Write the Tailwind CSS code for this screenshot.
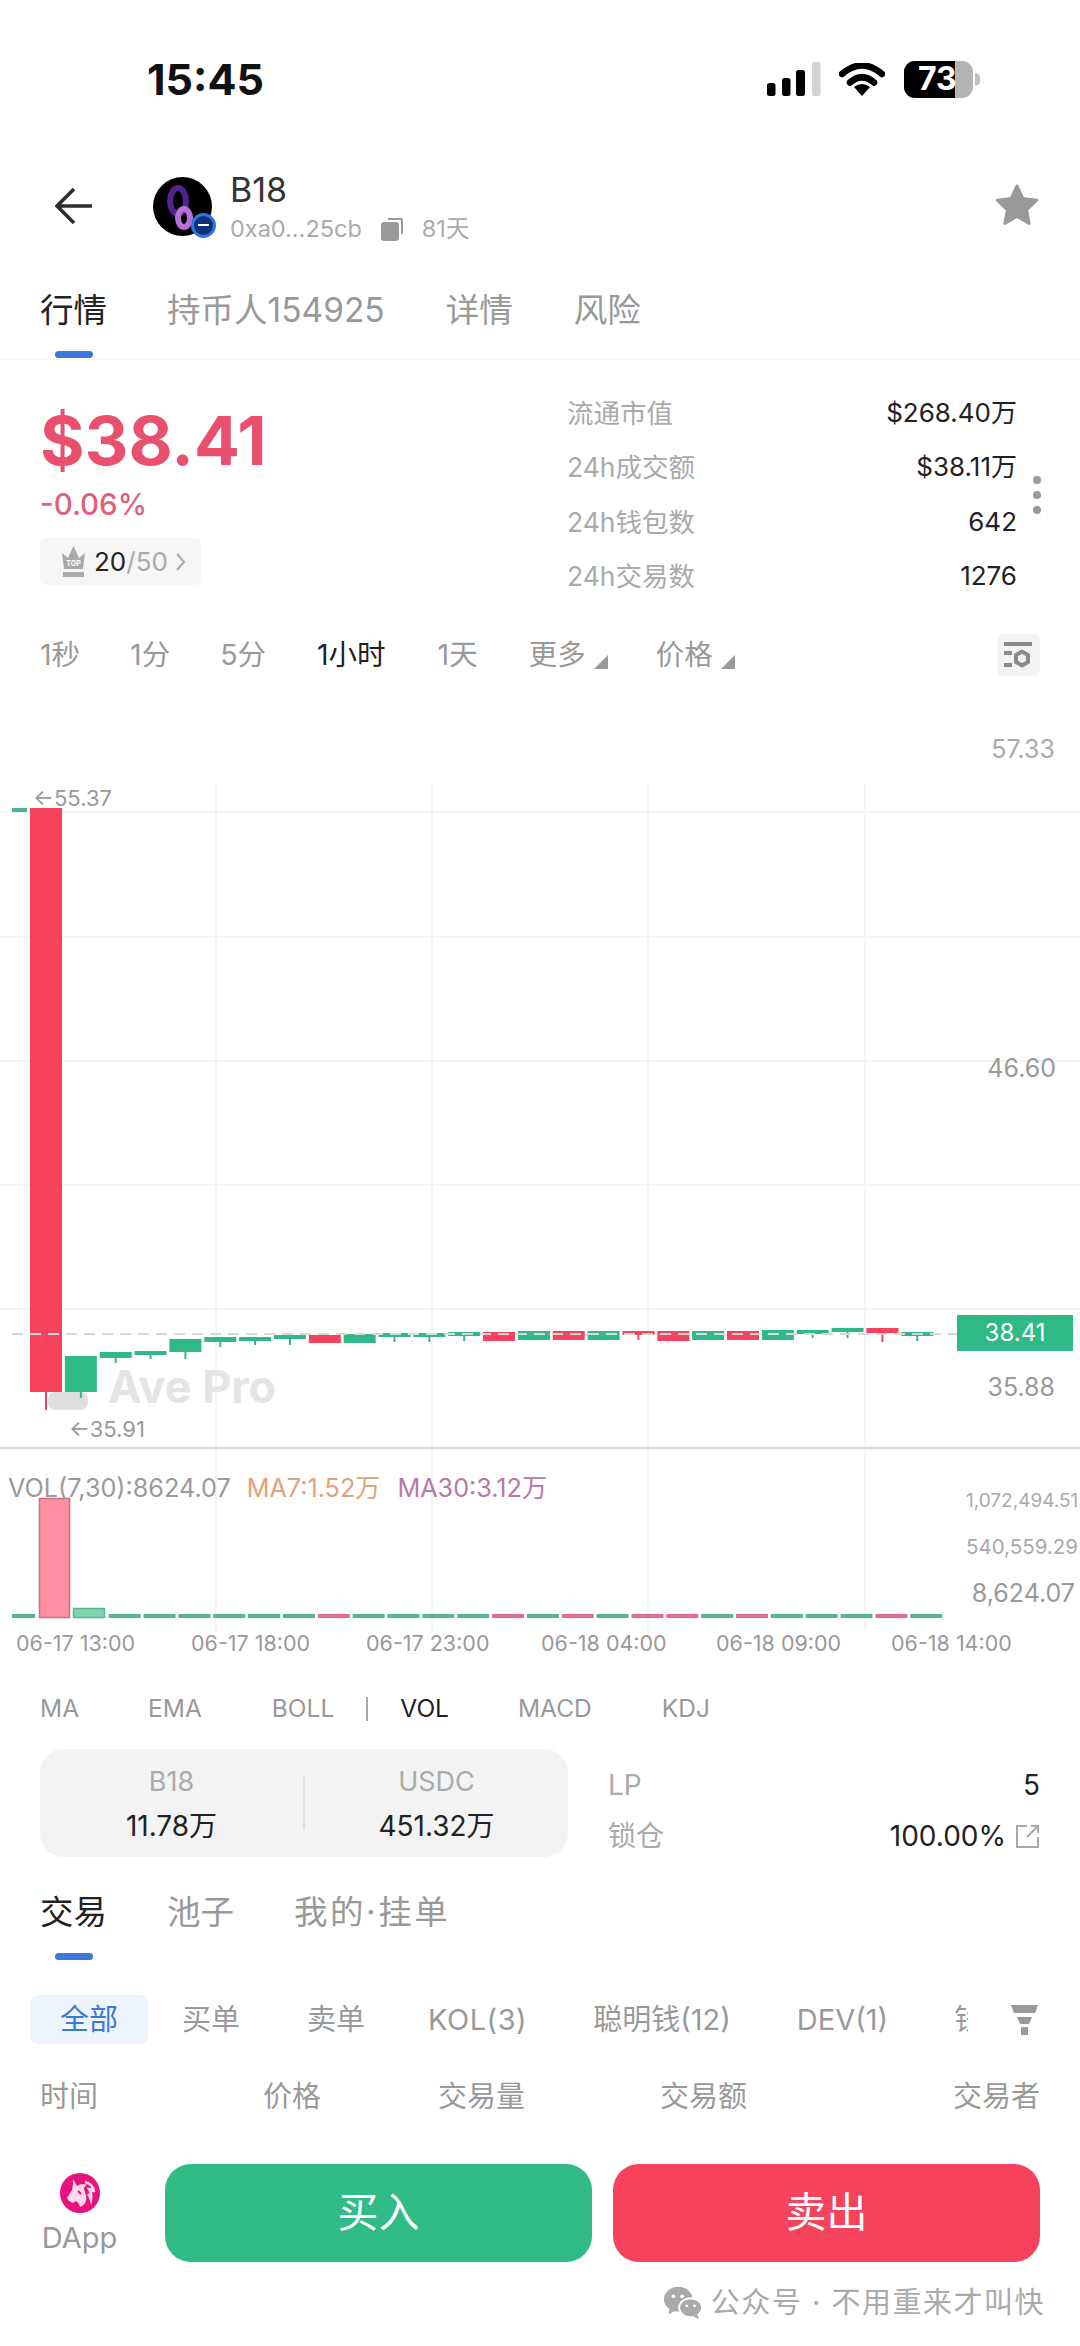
<!DOCTYPE html>
<html lang="zh-CN">
  <head>
    <meta charset="UTF-8" />
    <title>B18</title>
    <script src="https://cdn.jsdelivr.net/npm/@tailwindcss/browser@4"></script>
  </head>
  <body class="bg-white">
    <div class="w-[1080px] h-[2346px] flex flex-col overflow-hidden bg-white text-[#222] font-['Inter','Noto_Sans_CJK_SC',sans-serif]">
      <!-- Status bar -->
      <div class="h-[162px] shrink-0 flex items-center pb-[4px] pl-[147px] pr-[100px] justify-between">
        <span class="text-[43px] font-bold text-[#111]">15:45</span>
        <div class="flex items-center">
          <svg width="54" height="34" viewBox="0 0 54 34">
            <rect x="0" y="21" width="8.500" height="13" rx="2.500" fill="#000" />
            <rect x="15" y="16" width="8.500" height="18" rx="2.500" fill="#000" />
            <rect x="29" y="8" width="9" height="26" rx="2.500" fill="#000" />
            <rect x="45" y="0" width="8.500" height="34" rx="2" fill="#d2d2d2" />
          </svg>
          <svg class="ml-[18px]" width="46" height="33" viewBox="0 0 46 33">
            <path d="M3 11Q23 -6 43 11" fill="none" stroke="#000" stroke-width="6.500" stroke-linecap="round" />
            <path d="M11 19.500Q23 9 35 19.500" fill="none" stroke="#000" stroke-width="6.500" stroke-linecap="round" />
            <path d="M23 33l-8-9q8-6 16 0z" fill="#000" />
          </svg>
          <div class="ml-[19px] relative w-[69px] h-[37px] rounded-[11px] bg-[#b4b4b4] overflow-hidden">
            <div class="absolute left-0 top-0 bottom-0 w-[51px] bg-black"></div>
            <span class="absolute left-[14px] top-0 h-[37px] flex items-center text-[32px] font-bold text-white">73</span>
          </div>
          <div class="ml-[2px] w-[5px] h-[13px] rounded-r-full bg-[#c0c0c0]"></div>
        </div>
      </div>

      <!-- Token header -->
      <div class="h-[88px] shrink-0 flex items-center pl-[55px] pr-[40px]">
        <svg width="38" height="40" viewBox="0 0 38 40">
          <path d="M37 20H3M19 3L2 20l17 17" fill="none" stroke="#2c2c2c" stroke-width="3.500" />
        </svg>
        <div class="relative ml-[60px] w-[59px] h-[59px] rounded-full bg-black shrink-0">
          <svg class="absolute inset-0" width="59" height="59" viewBox="0 0 59 59">
            <ellipse cx="25" cy="24" rx="8" ry="13" fill="none" stroke="#4f2490" stroke-width="6" />
            <ellipse cx="31" cy="41" rx="6" ry="9" fill="none" stroke="#b96fd8" stroke-width="6" />
          </svg>
          <div class="absolute right-[-4px] bottom-[-2px] w-[25px] h-[25px] rounded-full bg-[#0f2f77] border-[3px] border-[#2f77e0] flex items-center justify-center">
            <div class="w-[11px] h-[2px] bg-white"></div>
          </div>
        </div>
        <div class="ml-[18px] flex flex-col">
          <span class="text-[34px] leading-[42px] text-[#333]">B18</span>
          <div class="flex items-center text-[23.500px] leading-[30px] text-[#aaa] mt-[3px]">
            <span>0xa0...25cb</span>
            <svg class="ml-[19px]" width="22" height="24" viewBox="0 0 22 24">
              <path d="M7 1h13a2 2 0 0 1 2 2v14h-2V3H7z" fill="#999" />
              <rect x="0" y="5" width="18" height="19" rx="3" fill="#999" />
            </svg>
            <span class="ml-[19px]">81天</span>
          </div>
        </div>
        <svg class="ml-auto" width="46" height="46" viewBox="0 0 24 24">
          <path d="M12 1.500l3.100 6.600 7.200.9-5.300 5 1.400 7.100-6.400-3.600-6.400 3.600 1.400-7.100-5.300-5 7.200-.9z" fill="#999" stroke="#999" stroke-width="1.500" stroke-linejoin="round" />
        </svg>
      </div>

      <!-- Tabs -->
      <div class="h-[110px] shrink-0 border-b border-[#f6f6f6] px-[40px] relative">
        <div class="flex items-center h-[120px] text-[33.500px] text-[#999]">
          <span class="text-[#222]">行情</span>
          <span class="ml-[60px]">持币人154925</span>
          <span class="ml-[61px]">详情</span>
          <span class="ml-[61px]">风险</span>
        </div>
        <div class="absolute left-[55px] top-[101px] w-[38px] h-[7px] rounded-full bg-[#3c78d8]"></div>
      </div>

      <!-- Price and stats -->
      <div class="h-[243px] shrink-0 flex pt-[26px] pl-[40px] pr-[39px]">
        <div class="w-[527px] shrink-0 flex flex-col items-start">
          <span class="mt-[18px] text-[68px] leading-[72px] font-bold text-[#e8506e]">$38.41</span>
          <span class="mt-[10px] text-[29.500px] leading-[36px] font-medium text-[#e0607c]">-0.06%</span>
          <div class="mt-[16px] h-[47px] w-[161px] rounded-[6px] bg-[#f6f6f6] flex items-center pl-[20px] text-[26px] text-[#aaa]">
            <svg width="27" height="34" viewBox="0 0 27 34">
              <path d="M2 8l6 5 5.500-12 5.500 12 6-5-2 16H4z" fill="#aaa" />
              <rect x="3" y="27" width="21" height="5" fill="#aaa" />
              <text x="13.500" y="21" text-anchor="middle" font-size="7" font-weight="700" fill="#fff">TOP</text>
            </svg>
            <span class="ml-[7px] text-[#222]">20</span><span>/50</span>
            <svg class="ml-[8px]" width="10" height="20" viewBox="0 0 10 20">
              <path d="M1 2l7 8-7 8" fill="none" stroke="#aaa" stroke-width="2" />
            </svg>
          </div>
        </div>
        <div class="w-[450px] shrink-0 flex flex-col text-[26px] leading-[54.400px]">
          <div class="flex justify-between"><span class="text-[#aaa] text-[26.500px]">流通市值</span><span>$268.40万</span></div>
          <div class="flex justify-between"><span class="text-[#aaa] text-[26.500px]">24h成交额</span><span>$38.11万</span></div>
          <div class="flex justify-between"><span class="text-[#aaa] text-[26.500px]">24h钱包数</span><span>642</span></div>
          <div class="flex justify-between"><span class="text-[#aaa] text-[26.500px]">24h交易数</span><span>1276</span></div>
        </div>
        <div class="ml-auto flex flex-col justify-center gap-[7px] h-[217px]">
          <div class="w-[8px] h-[8px] rounded-full bg-[#999]"></div>
          <div class="w-[8px] h-[8px] rounded-full bg-[#999]"></div>
          <div class="w-[8px] h-[8px] rounded-full bg-[#999]"></div>
        </div>
      </div>

      <!-- Timeframes -->
      <div class="h-[104px] shrink-0 flex items-center pl-[40px] pr-[40px] text-[28.500px] text-[#999]">
        <span>1秒</span>
        <span class="ml-[50px]">1分</span>
        <span class="ml-[50px]">5分</span>
        <span class="ml-[51px] text-[#222]">1小时</span>
        <span class="ml-[52px]">1天</span>
        <span class="ml-[51px]">更多</span>
        <svg class="ml-[8px] mt-[14px]" width="14" height="14" viewBox="0 0 14 14"><path d="M14 0v14H0z" fill="#999" /></svg>
        <span class="ml-[48px]">价格</span>
        <svg class="ml-[8px] mt-[14px]" width="14" height="14" viewBox="0 0 14 14"><path d="M14 0v14H0z" fill="#999" /></svg>
        <div class="ml-auto w-[43px] h-[42px] rounded-[6px] bg-[#f3f3f3] flex items-center justify-center">
          <svg width="29" height="26" viewBox="0 0 29 26">
            <path d="M0 2h28" fill="none" stroke="#8a8a8a" stroke-width="4" />
            <path d="M0 11h8M0 23h8" fill="none" stroke="#8a8a8a" stroke-width="4" />
            <path d="M18 9.500l6 3.500v7l-6 3.500-6-3.500v-7z" fill="none" stroke="#8a8a8a" stroke-width="4" stroke-linejoin="round" />
          </svg>
        </div>
      </div>

      <!-- Chart -->
      <div class="relative h-[961px] shrink-0">
        <svg id="chart" class="absolute inset-0" width="1080" height="961" viewBox="0 707 1080 961">
          <g id="grid" stroke="#f4f4f4" stroke-width="2">
            <path d="M0 812H1080M0 937H1080M0 1061H1080M0 1185H1080M0 1309H1080" />
            <path d="M216 783V1630M432 783V1630M648 783V1630M865 783V1630" />
          </g>
          <rect x="48" y="1392" width="40" height="18" rx="8" fill="#dedede" />
          <rect x="12" y="808" width="15" height="4" fill="#4caf8e" />
          <g id="candles"></g>
          <path d="M12 1334H957" stroke="#d8d8d8" stroke-width="2" stroke-dasharray="11 7" />
          <path d="M0 1448H1080" stroke="#dcdcdc" stroke-width="2.500" />
          <g id="bars"></g>
          <rect x="957" y="1315" width="116" height="36" fill="#2fb986" />
        </svg>
        <span class="absolute left-[108px] top-[652px] text-[45px] leading-[56px] font-bold text-[#e4e4e4]">Ave Pro</span>
        <span class="absolute left-[33px] top-[79px] text-[22px] leading-[24px] text-[#999]">←55.37</span>
        <span class="absolute left-[69px] top-[710px] text-[22px] leading-[24px] text-[#999]">←35.91</span>
        <span class="absolute right-[25px] top-[27px] text-[25px] leading-[30px] text-[#aaa]">57.33</span>
        <span class="absolute right-[24px] top-[346px] text-[25px] leading-[30px] text-[#999]">46.60</span>
        <span class="absolute right-[25px] top-[665px] text-[25px] leading-[30px] text-[#999]">35.88</span>
        <span class="absolute left-[957px] w-[116px] top-[608px] text-center text-[24px] leading-[36px] text-white">38.41</span>
        <div class="absolute left-[8px] top-[767px] flex text-[25.200px] leading-[28px] text-[#999]">
          <span>VOL(7,30):8624.07</span>
          <span class="ml-[16px] text-[#e0a37e]">MA7:1.52万</span>
          <span class="ml-[17px] text-[#b878a8]">MA30:3.12万</span>
        </div>
        <span class="absolute left-[966px] top-[782px] text-[19px] leading-[24px] text-[#aaa] whitespace-nowrap">1,072,494.51</span>
        <span class="absolute left-[966px] top-[828px] text-[20.500px] leading-[24px] text-[#aaa] whitespace-nowrap">540,559.29</span>
        <span class="absolute right-[5px] top-[872px] text-[25px] leading-[28px] text-[#999]">8,624.07</span>
        <div class="absolute left-[16px] top-[923px] grid grid-cols-[repeat(6,175px)] text-[21.500px] leading-[26px] text-[#999] whitespace-nowrap">
          <span>06-17 13:00</span>
          <span>06-17 18:00</span>
          <span>06-17 23:00</span>
          <span>06-18 04:00</span>
          <span>06-18 09:00</span>
          <span>06-18 14:00</span>
        </div>
      </div>

      <!-- Indicators -->
      <div class="h-[81px] shrink-0 flex items-center pl-[40px] text-[24.500px] text-[#999]">
        <span>MA</span>
        <span class="ml-[69px]">EMA</span>
        <span class="ml-[70px]">BOLL</span>
        <div class="ml-[32px] w-[2px] h-[24px] bg-[#aaa]"></div>
        <span class="ml-[32px] text-[#222]">VOL</span>
        <span class="ml-[69px]">MACD</span>
        <span class="ml-[70px]">KDJ</span>
      </div>

      <!-- Pool -->
      <div class="h-[108px] shrink-0 flex pl-[40px] pr-[40px]">
        <div class="w-[528px] rounded-[24px] bg-[#f3f3f3] flex items-center">
          <div class="flex-1 flex flex-col items-center pt-[2px]">
            <span class="text-[27px] leading-[45px] text-[#aaa]">B18</span>
            <span class="text-[28px] leading-[45px]">11.78万</span>
          </div>
          <div class="w-[2px] h-[53px] bg-[#e0e0e0]"></div>
          <div class="flex-1 flex flex-col items-center pt-[2px]">
            <span class="text-[27px] leading-[45px] text-[#aaa]">USDC</span>
            <span class="text-[28px] leading-[45px]">451.32万</span>
          </div>
        </div>
        <div class="flex-1 ml-[40px] flex flex-col pt-[11px] text-[28px] leading-[51px]">
          <div class="flex justify-between"><span class="text-[#aaa]">LP</span><span>5</span></div>
          <div class="flex justify-between items-center">
            <span class="text-[#aaa]">锁仓</span>
            <span class="flex items-center">100.00%
              <svg class="ml-[9px]" width="25" height="25" viewBox="0 0 25 25">
                <path d="M12 2H2v21h21V13M12 13L23 2M16 2h7v7" fill="none" stroke="#aaa" stroke-width="2" />
              </svg>
            </span>
          </div>
        </div>
      </div>

      <!-- Trade tabs -->
      <div class="relative h-[138px] shrink-0 flex pl-[40px] pt-[32px] text-[33.500px] leading-[46px] text-[#999]">
        <span class="text-[#222]">交易</span>
        <span class="ml-[60px]">池子</span>
        <span class="ml-[60px] tracking-[2.500px]">我的·挂单</span>
        <div class="absolute left-[55px] top-[96px] w-[38px] h-[7px] rounded-full bg-[#3c78d8]"></div>
      </div>

      <!-- Trade filters -->
      <div class="h-[49px] shrink-0 flex items-center pl-[30px] pr-[42px] text-[29px] text-[#999] whitespace-nowrap">
        <span class="w-[118px] h-[49px] rounded-[8px] bg-[#eef4fb] text-[#3c78d8] flex items-center justify-center">全部</span>
        <span class="ml-[34px]">买单</span>
        <span class="ml-[67px]">卖单</span>
        <span class="ml-[63px] tracking-[0.500px]">KOL(3)</span>
        <span class="ml-[66px]">聪明钱(12)</span>
        <span class="ml-[66px]">DEV(1)</span>
        <span class="ml-[66px] w-[14px] overflow-hidden">钱包</span>
        <svg class="ml-auto" width="27" height="30" viewBox="0 0 27 30">
          <path d="M0 0h27l-3 8H3zM6 12h15l-3 7H9zM10 22h7v8h-7z" fill="#999" />
        </svg>
      </div>

      <!-- Trade columns -->
      <div class="h-[106px] shrink-0 flex items-center pl-[40px] text-[29px] text-[#999]">
        <span>时间</span>
        <span class="ml-[165px]">价格</span>
        <span class="ml-[117px]">交易量</span>
        <span class="ml-[135px]">交易额</span>
        <span class="ml-[206px]">交易者</span>
      </div>

      <!-- Actions -->
      <div class="h-[112px] shrink-0 flex items-end pl-[42px]">
        <div class="w-[75px] h-[98px] flex flex-col items-center">
          <svg class="mt-[9px]" width="40" height="40" viewBox="0 0 40 40">
            <circle cx="20" cy="20" r="20" fill="#e6127e" />
            <!-- unicorn head -->
            <path d="M13 6l4 7c3-2 7-3 10-1-2 1-3 2-3 4 1 4 3 7 2 12-1 3-3 5-6 6-1-3-2-5-4-6l-3 2-4-2-2-3 5-8c1-4 1-7 1-11z" fill="#fbd9ea" />
            <path d="M25 9c5 1 9 5 9 10-1-2-3-3-5-3 2 3 3 6 2 11-1-3-2-5-3-6" fill="none" stroke="#fbd9ea" stroke-width="2.500" />
            <path d="M18 18l3 3" stroke="#e6127e" stroke-width="2" />
          </svg>
          <span class="mt-[6px] text-[29px] leading-[38px] text-[#999]">DApp</span>
        </div>
        <button class="ml-[48px] w-[427px] h-[98px] rounded-[26px] bg-[#30bb87] text-[41px] text-white">买入</button>
        <button class="ml-[21px] w-[427px] h-[98px] rounded-[26px] bg-[#f6435d] text-[41px] text-white">卖出</button>
      </div>

      <!-- Watermark -->
      <div class="flex-1 flex items-start justify-end pr-[35px] pt-[21px] text-[29px] leading-[40px] text-[#aaa] tracking-[1.500px]">
        <svg class="mt-[3px]" width="40" height="34" viewBox="0 0 42 34">
          <ellipse cx="16" cy="13" rx="15" ry="13" fill="#aaa" />
          <path d="M7 22l-1 7 7-4z" fill="#aaa" />
          <ellipse cx="29" cy="22" rx="12" ry="10" fill="#aaa" stroke="#fff" stroke-width="2" />
          <path d="M36 29l2 5-6-3z" fill="#aaa" />
          <circle cx="11" cy="10" r="2" fill="#fff" /><circle cx="20" cy="10" r="2" fill="#fff" />
          <circle cx="25" cy="20" r="1.500" fill="#fff" /><circle cx="33" cy="20" r="1.500" fill="#fff" />
        </svg>
        <span class="ml-[8px]">公众号 · 不用重来才叫快</span>
      </div>
    </div>

    <script>
      const NS = "http://www.w3.org/2000/svg";
      const green = "#2fb986";
      const red = "#f6435d";

      function rect(parent, x, y, w, h, fill, stroke) {
        const r = document.createElementNS(NS, "rect");
        r.setAttribute("x", x);
        r.setAttribute("y", y);
        r.setAttribute("width", w);
        r.setAttribute("height", h);
        r.setAttribute("fill", fill);
        if (stroke) {
          r.setAttribute("stroke", stroke);
          r.setAttribute("stroke-width", 1.5);
        }
        parent.appendChild(r);
      }

      // [color, top, bottom, wick bottom], y in full page pixels
      const candles = [
        ["r", 808, 1392, 1410],
        ["g", 1356, 1392, 1398],
        ["g", 1352, 1358, 1363],
        ["g", 1351, 1355, 1359],
        ["g", 1339, 1352, 1359],
        ["g", 1337, 1342, 1347],
        ["g", 1337, 1341, 1345],
        ["g", 1335, 1339, 1345],
        ["r", 1335, 1343, 1343],
        ["g", 1334, 1343, 1343],
        ["g", 1333, 1337, 1342],
        ["g", 1333, 1337, 1342],
        ["g", 1332, 1336, 1341],
        ["r", 1332, 1341, 1341],
        ["g", 1331, 1340, 1340],
        ["r", 1331, 1340, 1340],
        ["g", 1331, 1340, 1340],
        ["r", 1331, 1335, 1340],
        ["r", 1331, 1341, 1341],
        ["g", 1331, 1340, 1340],
        ["r", 1331, 1340, 1340],
        ["g", 1330, 1340, 1340],
        ["g", 1330, 1334, 1338],
        ["g", 1328, 1332, 1338],
        ["r", 1328, 1333, 1342],
        ["g", 1332, 1336, 1341],
      ];
      const candleGroup = document.getElementById("candles");
      candles.forEach(([c, top, bottom, wick], i) => {
        const x = 30 + i * 34.85;
        const fill = c === "r" ? red : green;
        if (wick > bottom) rect(candleGroup, x + 15, bottom, 2, wick - bottom, fill);
        rect(candleGroup, x, top, 32, bottom - top, fill);
      });

      // volume bars: first two are the tall ones, the rest are flat
      const barGroup = document.getElementById("bars");
      const redBars = [9, 14, 16, 18, 19, 21, 25];
      rect(barGroup, 12, 1614, 23, 4, "#55b592");
      rect(barGroup, 39.5, 1498.5, 30, 119, "#ff8fa3", "#c7707f");
      rect(barGroup, 73.5, 1608.5, 31, 9, "#7fd3b0", "#55b592");
      for (let i = 3; i < 27; i++) {
        const x = 39 + (i - 1) * 34.85;
        rect(barGroup, x, 1614, 32, 4, redBars.includes(i) ? "#e8698a" : "#55b592");
      }
    </script>
  </body>
</html>
